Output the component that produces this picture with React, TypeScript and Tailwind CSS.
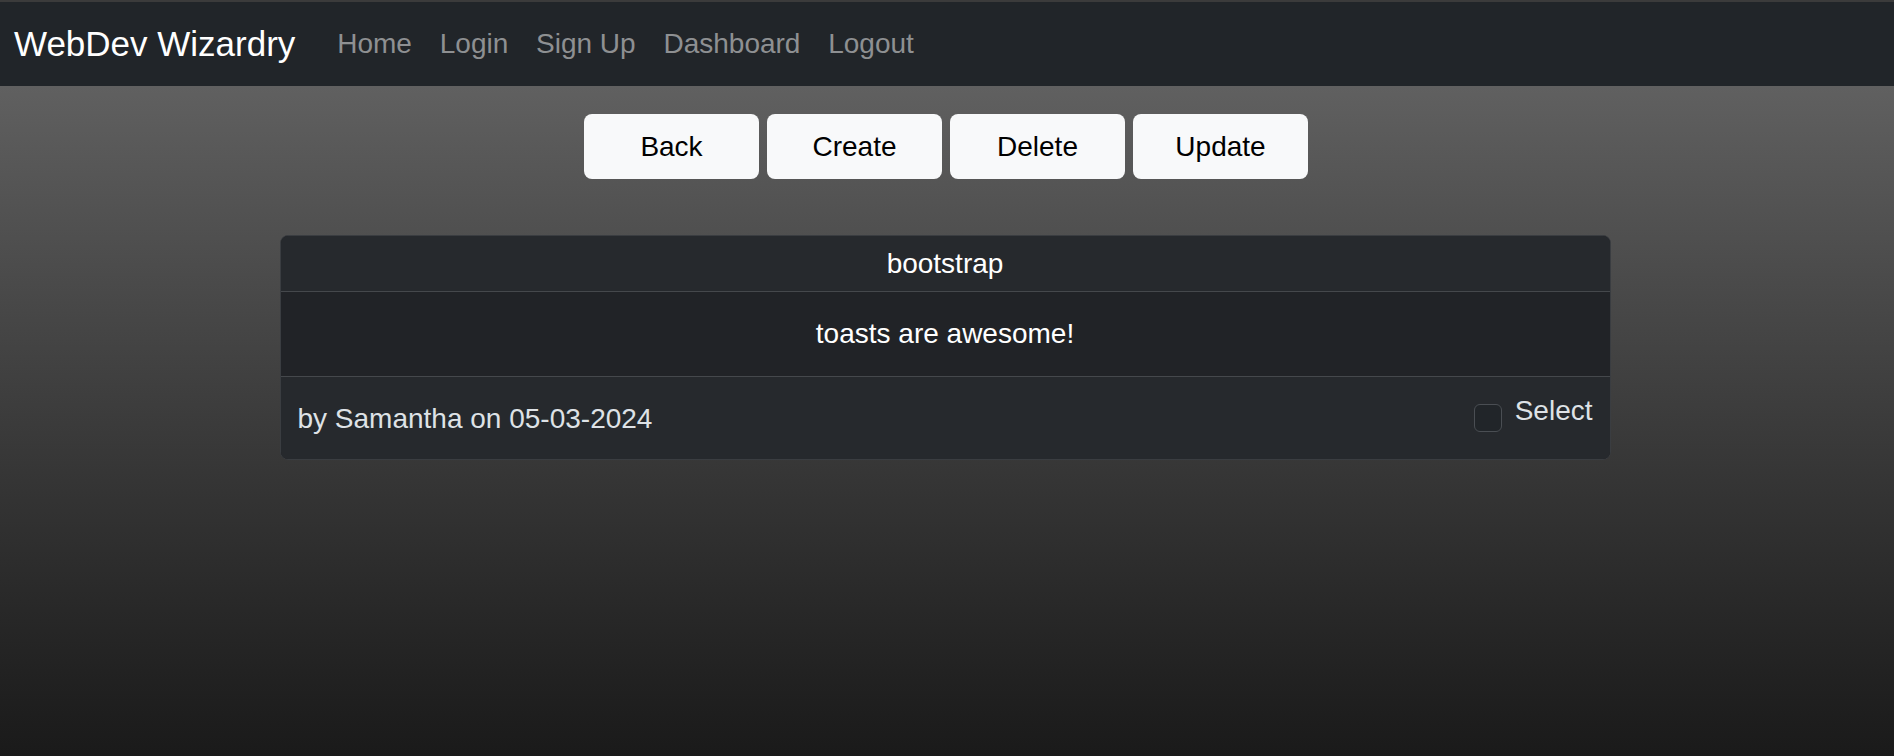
import React from "react";

export default function App() {
  const font = { fontFamily: '"Liberation Sans", Arial, sans-serif' };
  return (
    <div
      className="min-h-[756px] w-full flex flex-col bg-[#3a3a3a]"
      style={font}
    >
      <div className="h-[2px] bg-[#3b3b3b]" />
      <nav className="h-[84px] bg-[#212529] flex items-center pl-[14px]">
        <span className="text-[35px] leading-[1.5] text-white mr-[28px]">WebDev Wizardry</span>
        <div className="flex items-center">
          {["Home", "Login", "Sign Up", "Dashboard", "Logout"].map((l) => (
            <a
              key={l}
              className="px-[13.9px] text-[28px] leading-[1.5] text-[#8e9092] cursor-pointer"
            >
              {l}
            </a>
          ))}
        </div>
      </nav>
      <main className="flex-1 bg-gradient-to-b from-[#606060] to-[#1a1a1a] flex flex-col items-center">
        <div className="flex gap-[8px] mt-[28px] ml-[-2px]">
          {["Back", "Create", "Delete", "Update"].map((b) => (
            <button
              key={b}
              className="w-[175px] h-[65px] rounded-[8px] bg-[#f8f9fa] text-black text-[28px] leading-[1.5] flex items-center justify-center"
            >
              {b}
            </button>
          ))}
        </div>
        <div className="mt-[56px] w-[1331px] ml-[-4px] rounded-[8px] border border-[#3a3d41] overflow-hidden bg-[#212327]">
          <div className="h-[56px] bg-[#26292d] border-b border-[#45484c] flex items-center justify-center text-white text-[28px] leading-[1.5]">
            bootstrap
          </div>
          <div className="h-[85px] bg-[#212327] border-b border-[#45484c] flex items-center justify-center text-white text-[28px] leading-[1.5]">
            toasts are awesome!
          </div>
          <div className="h-[82px] bg-[#26292d] flex items-center justify-between pl-[17px] pr-[17px] text-[#dee2e6] text-[28px] leading-[1.5]">
            <span className="mt-[1px]">by Samantha on 05-03-2024</span>
            <label className="flex items-center gap-[13px]">
              <span className="w-[28px] h-[28px] rounded-[6px] border border-[#4a4e53] bg-[#212529] inline-block" />
              <span className="mb-[15px]">Select</span>
            </label>
          </div>
        </div>
      </main>
    </div>
  );
}
